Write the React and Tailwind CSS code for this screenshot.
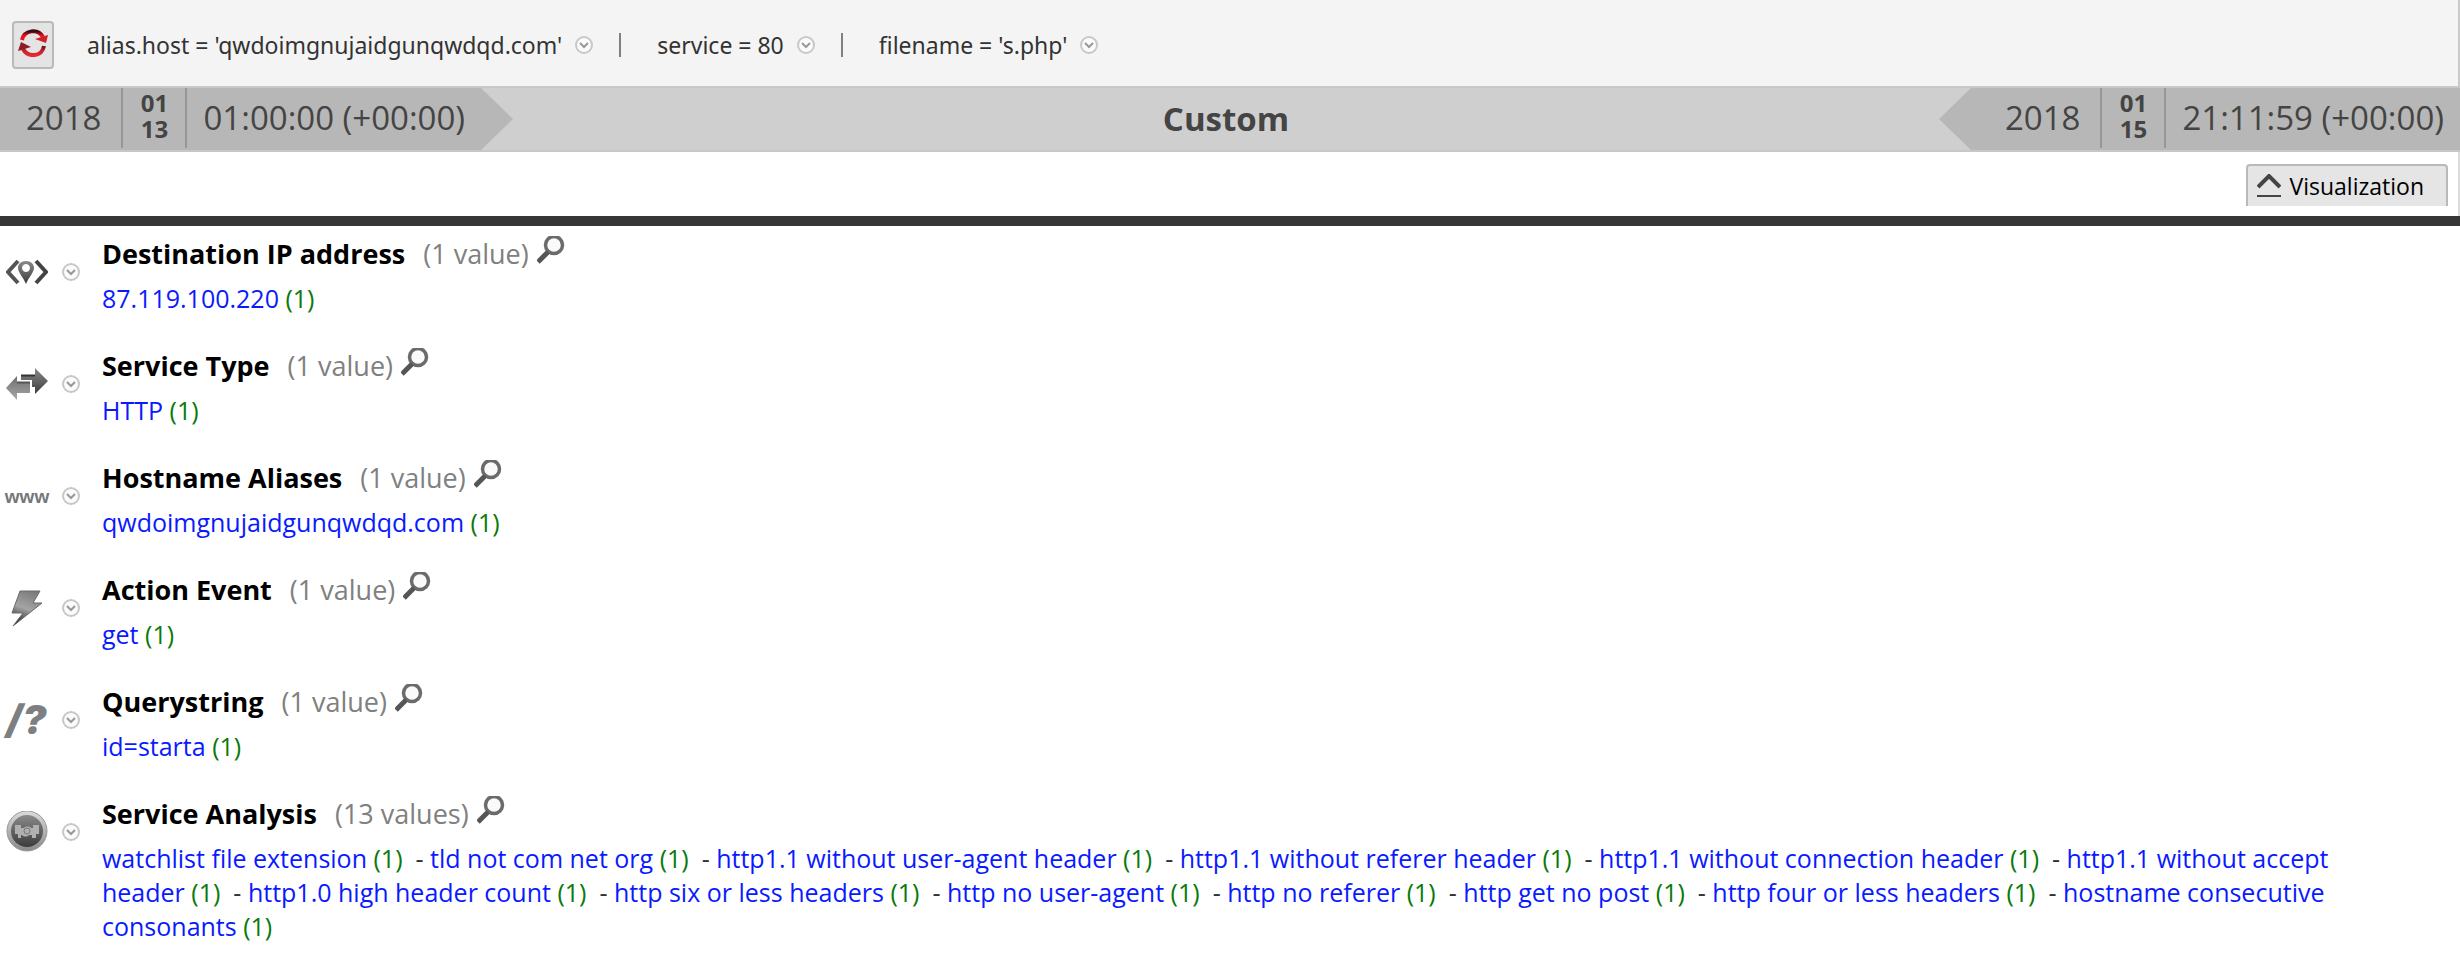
import React, { useState } from "react";

const filters = [
  "alias.host = 'qwdoimgnujaidgunqwdqd.com'",
  "service = 80",
  "filename = 's.php'",
];

const metaKeys = [
  { name: "Destination IP address", icon: "ip", values: ["87.119.100.220"] },
  { name: "Service Type", icon: "service", values: ["HTTP"] },
  { name: "Hostname Aliases", icon: "www", values: ["qwdoimgnujaidgunqwdqd.com"] },
  { name: "Action Event", icon: "action", values: ["get"] },
  { name: "Querystring", icon: "query", values: ["id=starta"] },
  {
    name: "Service Analysis",
    icon: "analysis",
    values: [
      "watchlist file extension",
      "tld not com net org",
      "http1.1 without user-agent header",
      "http1.1 without referer header",
      "http1.1 without connection header",
      "http1.1 without accept header",
      "http1.0 high header count",
      "http six or less headers",
      "http no user-agent",
      "http no referer",
      "http get no post",
      "http four or less headers",
      "hostname consecutive consonants",
    ],
  },
];

// Shared gradients for the meta key icons
const IconDefs = () => (
  <svg width="0" height="0" className="absolute" aria-hidden="true">
    <defs>
      <linearGradient id="dark" x1="0" y1="0" x2="0" y2="1">
        <stop offset="0" stopColor="#8a8a8a" />
        <stop offset="1" stopColor="#3c3c3c" />
      </linearGradient>
      <linearGradient id="light" x1="0" y1="0" x2="0" y2="1">
        <stop offset="0" stopColor="#6e6e6e" />
        <stop offset="1" stopColor="#a8a8a8" />
      </linearGradient>
      <linearGradient id="bolt" x1="0.6" y1="0" x2="0.3" y2="1">
        <stop offset="0" stopColor="#7c7c7c" />
        <stop offset="0.5" stopColor="#a4a4a4" />
        <stop offset="1" stopColor="#1c1c1c" />
      </linearGradient>
      <linearGradient id="ring" x1="0" y1="0" x2="0" y2="1">
        <stop offset="0" stopColor="#dcdcdc" />
        <stop offset="1" stopColor="#8a8a8a" />
      </linearGradient>
      <linearGradient id="redTop" x1="0" y1="0" x2="0" y2="1">
        <stop offset="0" stopColor="#3a0a0e" />
        <stop offset="0.5" stopColor="#e8141f" />
        <stop offset="1" stopColor="#e8141f" />
      </linearGradient>
      <linearGradient id="redBottom" x1="0" y1="0" x2="0" y2="1">
        <stop offset="0" stopColor="#5a1418" />
        <stop offset="0.5" stopColor="#c8202a" />
        <stop offset="1" stopColor="#e02a34" />
      </linearGradient>
    </defs>
  </svg>
);

const MetaIcon = ({ type }) => {
  if (type === "www") {
    return (
      <span className="flex w-[42px] justify-center font-['Liberation_Sans',sans-serif] text-[19px] leading-none font-bold text-[#75777a]">
        www
      </span>
    );
  }
  if (type === "query") {
    return (
      <span className="w-[42px] font-['Inter',sans-serif] text-[40px] leading-none font-black text-[#7d7f82] italic">
        /?
      </span>
    );
  }
  return (
    <svg width="42" height="42" viewBox="0 0 42 42" fill="none" aria-hidden="true">
      {type === "ip" && (
        <>
          <path d="M12 10 L2 21 L12 32" stroke="#555" strokeWidth="4" />
          <path d="M30 10 L40 21 L30 32" stroke="#444" strokeWidth="4" />
          <path
            fillRule="evenodd"
            fill="url(#dark)"
            d="M20 10 C25 10 28 13 28 17 C28 21 23 26 20 33 C17 26 12 21 12 17 C12 13 15 10 20 10 Z M20 13 a4 4 0 1 0 0.010 0 Z"
          />
        </>
      )}
      {type === "service" && (
        <>
          <path d="M15 12 H29 V5 L42 18 L29 31 V24 H26 V17 H15 Z" fill="url(#dark)" />
          <path d="M15 12.500 H29" stroke="#333" strokeWidth="2" />
          <path d="M24 19 H11 V13 L0 25 L11 37 V30 H24 Z" fill="url(#light)" />
          <path d="M11 19.500 H24" stroke="#555" strokeWidth="2" />
        </>
      )}
      {type === "action" && (
        <path
          d="M14 4 H34 L27 16 H36 L7 39 L17 26 H6 Z"
          fill="url(#bolt)"
          stroke="#6a6a6a"
        />
      )}
      {type === "analysis" && (
        <>
          <circle cx="21" cy="20" r="20" fill="url(#ring)" stroke="#999" />
          <circle cx="21" cy="20" r="16" fill="url(#dark)" />
          <path
            d="M9 14 h6 v3 h3 c1 -2 6 -2 7 0 h2 v-3 h6 v9 h-3 v4 h-4 v-3 h-3 c-2 2 -5 2 -7 0 h-1 v3 h-3 v-4 h-3 Z"
            fill="#b0b0b0"
          />
          <circle cx="21" cy="20" r="3" stroke="#777" />
        </>
      )}
    </svg>
  );
};

const DropdownButton = ({ label }) => (
  <button type="button" aria-label={label} className="h-[18px] w-[18px] shrink-0">
    <svg width="18" height="18" viewBox="0 0 18 18" fill="none" aria-hidden="true">
      <circle cx="9" cy="9" r="8" fill="#fbfbfb" stroke="#c8c8c8" strokeWidth="2" />
      <path d="M5 7 L9 11 L13 7" stroke="#999" strokeWidth="2" />
    </svg>
  </button>
);

const SearchIcon = () => (
  <svg width="28" height="28" viewBox="0 0 28 28" fill="none" aria-hidden="true">
    <circle cx="17" cy="9" r="8.500" fill="#fafafa" stroke="#6b6b6b" strokeWidth="3.500" />
    <path d="M11 16 L1 26" stroke="#555" strokeWidth="5" />
  </svg>
);

const TimeBlock = ({ year, month, day, time }) => (
  <div className="flex h-[60px] text-[33px] leading-[60px] text-[#444]">
    <span className="pr-5 pl-[26px]">{year}</span>
    <span className="flex w-[66px] flex-col items-center border-x-2 border-[#979797] pt-[2px] text-[24px] leading-[26px] font-bold">
      <span>{month}</span>
      <span>{day}</span>
    </span>
    <span className="px-4 whitespace-nowrap">{time}</span>
  </div>
);

const MetaRow = ({ meta }) => (
  <section className="flex pb-[33px]">
    <div className="flex h-[72px] w-[102px] shrink-0 items-center gap-[14px] pl-[6px]">
      <MetaIcon type={meta.icon} />
      <DropdownButton label={`${meta.name} options`} />
    </div>
    <div className="flex-1 pr-[100px]">
      <h2 className="flex h-9 items-center text-[27px]">
        <span className="font-bold text-black">{meta.name}</span>
        <span className="ml-[18px] text-[#808080]">
          ({meta.values.length} {meta.values.length === 1 ? "value" : "values"})
        </span>
        <button type="button" aria-label={`Search ${meta.name}`} className="ml-2 self-start">
          <SearchIcon />
        </button>
      </h2>
      <p className="mt-[9px] text-[25px] leading-[34px] text-[#333]">
        {meta.values.map((value, i) => (
          <React.Fragment key={value}>
            {i > 0 && <>&nbsp; - </>}
            <a href="#" className="text-[#0a1aff]">
              {value}
            </a>{" "}
            <span className="text-[#0a7a0a]">(1)</span>
          </React.Fragment>
        ))}
      </p>
    </div>
  </section>
);

const App = () => {
  const [showVisualization, setShowVisualization] = useState(false);

  return (
    <div className="min-h-screen bg-white font-['Open_Sans','Noto_Sans',sans-serif]">
      <IconDefs />

      {/* Query breadcrumb */}
      <header className="flex h-[86px] items-center border-r-2 border-[#c9c9c9] bg-[#f4f4f4] pt-1 pl-3">
        <button
          type="button"
          aria-label="Reload"
          className="flex h-12 w-[42px] justify-center rounded border-2 border-[#b9b9b9] bg-[#e4e4e4] pt-[6px]"
        >
          <svg width="30" height="28" viewBox="0 0 30 28" fill="none" aria-hidden="true">
            <path d="M4 11 C6 1 20 -1 25 8" stroke="url(#redTop)" strokeWidth="4" />
            <path d="M17 10 L28 14 L30 6 Z" fill="#d0202a" />
            <path d="M26 17 C24 28 10 29 5 20" stroke="url(#redBottom)" strokeWidth="4" />
            <path d="M3 13 L13 18 L0 22 Z" fill="#8e1c24" />
          </svg>
        </button>
        <nav className="ml-[33px] flex items-center text-[23px] text-[#333]">
          {filters.map((filter, i) => (
            <React.Fragment key={filter}>
              {i > 0 && <span className="mr-9 ml-[26px] h-6 w-[2px] bg-[#808080]" />}
              <span className="mr-[13px] font-['Noto_Sans',sans-serif]">{filter}</span>
              <DropdownButton label={`${filter} options`} />
            </React.Fragment>
          ))}
        </nav>
      </header>

      {/* Time range */}
      <div className="flex h-[66px] justify-between border-y-2 border-[#c7c7c7] bg-[#cfcfcf]">
        <div className="flex">
          <div className="bg-[#b7b7b7]">
            <TimeBlock year="2018" month="01" day="13" time="01:00:00 (+00:00)" />
          </div>
          <svg width="32" height="62" viewBox="0 0 32 62" aria-hidden="true">
            <path d="M0 0 L32 31 L0 62 Z" fill="#b7b7b7" />
          </svg>
        </div>
        <div className="self-center text-[33px] font-bold text-[#444]">Custom</div>
        <div className="flex">
          <svg width="32" height="62" viewBox="0 0 32 62" aria-hidden="true">
            <path d="M32 0 L0 31 L32 62 Z" fill="#b7b7b7" />
          </svg>
          <div className="bg-[#b7b7b7] pl-2">
            <TimeBlock year="2018" month="01" day="15" time="21:11:59 (+00:00)" />
          </div>
        </div>
      </div>

      <div className="flex h-16 justify-end border-r-2 border-[#d9d9d9] pt-3 pr-[10px]">
        <button
          type="button"
          aria-expanded={showVisualization}
          onClick={() => setShowVisualization(!showVisualization)}
          className="flex h-[42px] items-center gap-[9px] rounded-t border-2 border-b-0 border-[#b9b9b9] bg-[#e5e5e5] pr-[22px] pl-[9px] text-[23px] text-black"
        >
          <svg width="24" height="24" viewBox="0 0 24 24" fill="none" aria-hidden="true">
            <path d="M1 13 L12 2 L23 13" stroke="#444" strokeWidth="4" />
            <path d="M0 22 H24" stroke="#444" strokeWidth="2" />
          </svg>
          Visualization
        </button>
      </div>
      <div className="h-[10px] bg-[#363636]" />

      <main className="pt-[10px]">
        {metaKeys.map((meta) => (
          <MetaRow key={meta.name} meta={meta} />
        ))}
      </main>
    </div>
  );
};

export default App;
